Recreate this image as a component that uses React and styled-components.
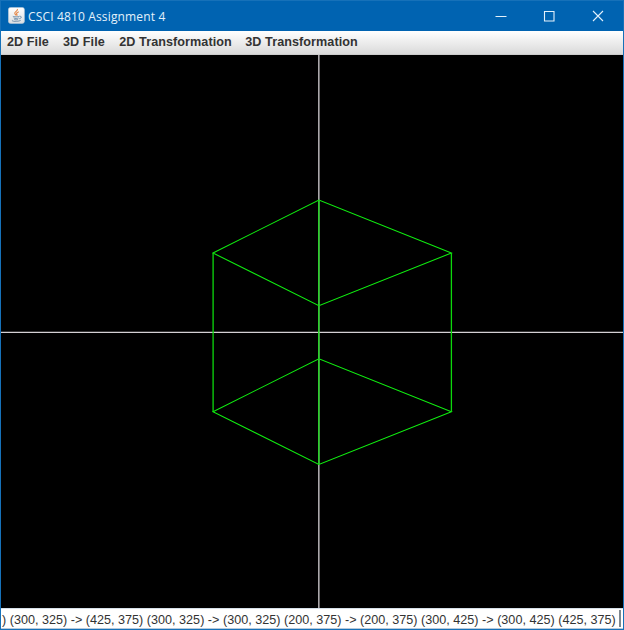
import React from "react";
import styled, { createGlobalStyle } from "styled-components";

const GlobalStyle = createGlobalStyle`
  * { box-sizing: border-box; }
  html, body { margin: 0; padding: 0; overflow: hidden; background: #0063b1; }
`;

const Window = styled.main`
  width: 624px;
  height: 630px;
  display: flex;
  flex-direction: column;
  border: 1px solid #1671b9;
  border-bottom-width: 2px;
  background: #0063b1;
`;

const TitleBar = styled.header`
  height: 30px;
  flex: none;
  display: flex;
  align-items: center;
  padding: 0 1px 1px 7px;
  color: #e3f1fb;
`;

const Title = styled.h1`
  flex: 1;
  margin: 2px 0 0 3px;
  font: 400 12px/18px "Open Sans", "Noto Sans", sans-serif;
  letter-spacing: 0.15px;
  white-space: nowrap;
`;

const WindowButton = styled.button`
  width: 48.5px;
  height: 29px;
  padding: 0;
  border: 0;
  background: none;
  color: inherit;
  display: grid;
  place-items: center;
`;

const MenuBar = styled.nav`
  height: 24px;
  flex: none;
  display: flex;
  align-items: center;
  gap: 14px;
  padding: 0 0 1px 6px;
  background: linear-gradient(#ffffff, #dadada);
  border-bottom: 1px solid #cccccc;
`;

const MenuItem = styled.span`
  width: ${(p) => p.$width}px;
  font: 700 12.6px/20px "Liberation Sans", Arial, sans-serif;
  letter-spacing: 0.07px;
  color: #333333;
  white-space: nowrap;
`;

const Canvas = styled.svg`
  display: block;
  width: 622px;
  height: 553px;
  flex: none;
  background: #000;
`;

const StatusField = styled.footer`
  flex: 1;
  display: flex;
  align-items: center;
  padding: 3px 0 0 1px;
  background: #fff;
  border-top: 1px solid #d5dfe8;
  border-bottom: 1px solid #b8c9da;
  font: 400 12.6px/16px "Liberation Sans", Arial, sans-serif;
  letter-spacing: 0.01px;
  color: #333;
  white-space: nowrap;
`;

const Coordinates = styled.span`
  width: 617px;
  flex: none;
`;

const Caret = styled.span`
  width: 2px;
  height: 17px;
  margin-top: -3px;
  background: #7d8790;
`;

const menus = [
  { label: "2D File", width: 42 },
  { label: "3D File", width: 42.3 },
  { label: "2D Transformation", width: 112 },
  { label: "3D Transformation", width: 113 },
];

function JavaIcon() {
  return (
    <svg width="17" height="17" viewBox="0 0 17 17" fill="none" aria-hidden="true">
      <defs>
        <linearGradient id="tile" x1="0" y1="0" x2="0" y2="1">
          <stop stopColor="#ffffff" />
          <stop offset="1" stopColor="#dcdfe2" />
        </linearGradient>
      </defs>
      <rect x="0.4" y="0.4" width="16" height="16" rx="2.2" fill="url(#tile)" stroke="#b9c9d8" strokeWidth="0.6" />
      <path d="M9.4 2c.8 1.9-3 2.7-2.6 4.4.2.8 1 1.3 1.3 2M10.8 4.7C9.3 5.3 8.3 6 8.6 6.9c.2.6.8 1 .2 1.8" stroke="#e58443" strokeWidth="1.1" />
      <path d="M5 9.2c-.8.8 5.4.8 6.5 0M5.7 10.9c1.2.8 3.8.7 5 0M6.3 12.4c1.2.6 2.8.5 3.8 0M11.7 9.4c2.5-.5 1.9 2-.5 2.4M4.5 13.2c-2 1.4 6.2 1.6 8.2.1" stroke="#6888a5" strokeWidth="0.9" />
    </svg>
  );
}

export default function App() {
  return (
    <>
      <GlobalStyle />
      <Window>
        <TitleBar>
          <JavaIcon />
          <Title>CSCI 4810 Assignment 4</Title>
          <WindowButton aria-label="Minimize">
            <svg width="12" height="12"><path d="M.5 6.5h11" stroke="currentColor" /></svg>
          </WindowButton>
          <WindowButton aria-label="Maximize">
            <svg width="12" height="12"><path d="M1.5 1.5h9.5v9.5h-9.5z" fill="none" stroke="currentColor" strokeWidth="1.1" /></svg>
          </WindowButton>
          <WindowButton aria-label="Close">
            <svg width="12" height="12"><path d="M1 1l10 10M11 1L1 11" stroke="currentColor" strokeWidth="1.1" /></svg>
          </WindowButton>
        </TitleBar>
        <MenuBar>
          {menus.map((m) => (
            <MenuItem key={m.label} $width={m.width}>{m.label}</MenuItem>
          ))}
        </MenuBar>
        <Canvas viewBox="1 55 622 553" fill="none">
          <path d="M318.85 55V608M1 332.3H623" stroke="#d4d0d4" strokeWidth="1.3" />
          <path
            d="M213 253L318.9 200L451.4 253L318.9 305.7ZM213 411.7L318.9 358.8L451.4 411.7L318.9 464.5Z"
            stroke="#10ee10"
            strokeWidth="1.05"
          />
          <path d="M213.1 253V411.7M318.85 200V464.5M451.4 253V411.7" stroke="#0cd80c" strokeWidth="1.3" />
        </Canvas>
        <StatusField>
          <Coordinates>
            ) (300, 325) -&gt; (425, 375) (300, 325) -&gt; (300, 325) (200, 375) -&gt; (200, 375) (300, 425) -&gt; (300, 425) (425, 375)
          </Coordinates>
          <Caret />
        </StatusField>
      </Window>
    </>
  );
}
